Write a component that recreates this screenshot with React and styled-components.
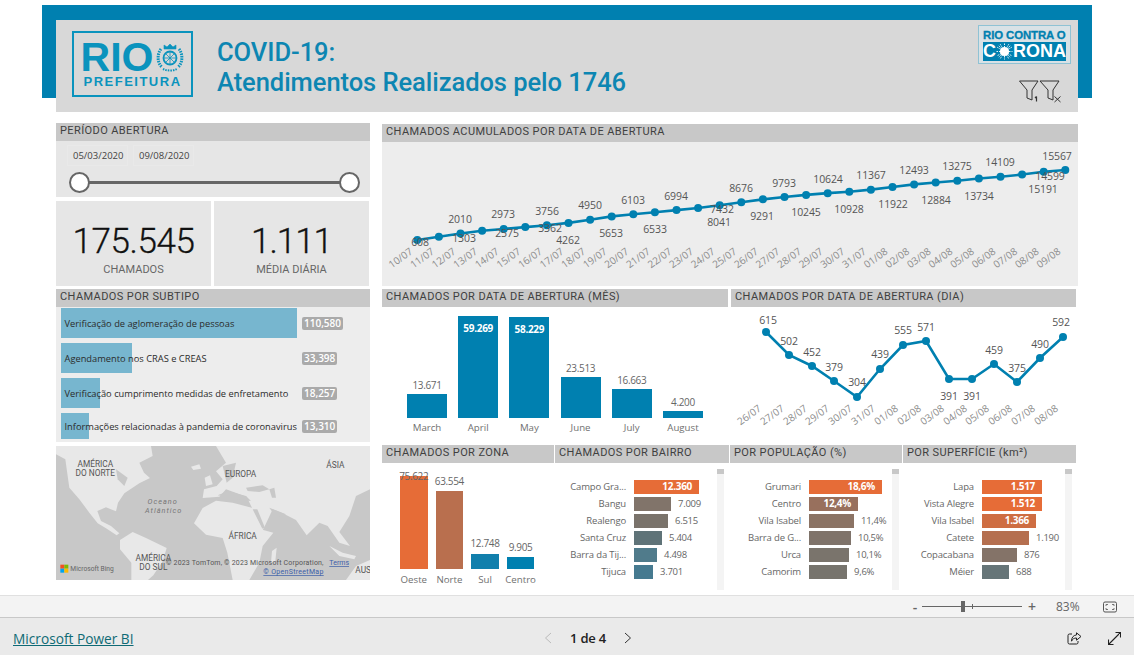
import React from "react"
import styled, { createGlobalStyle } from "styled-components"

const BLUE = "#0080b0"
const ORANGE = "#e66c37"

const GlobalStyle = createGlobalStyle`
html, body { margin: 0; padding: 0; background: #fff; overflow: hidden; }
* { box-sizing: border-box; }
`

const Page = styled.div`
height: 100vh;
display: flex;
flex-direction: column;
font-family: "Open Sans", sans-serif;
`
const Canvas = styled.div`
flex: 1;
padding-top: 5px;
`
const Banner = styled.div`
width: 1050px;
height: 93px;
margin-left: 42px;
padding: 15px 14px 0;
background: ${BLUE};
`
const Header = styled.header`
height: 92px;
background: #d8d8d8;
display: flex;
align-items: flex-start;
padding: 11px 7px 0 16px;
`
const LogoBox = styled.div`
width: 121px;
height: 66px;
border: 2px solid #0a93bd;
color: #0a93bd;
display: flex;
flex-direction: column;
align-items: center;
padding-top: 9px;
`
const LogoTop = styled.div`
display: flex;
align-items: center;
gap: 3px;
height: 30px;
`
const LogoRio = styled.span`
font-family: "Liberation Sans", sans-serif;
font-weight: 700;
font-size: 41px;
line-height: 30px;
`
const LogoPref = styled.span`
font-family: "Liberation Sans", sans-serif;
font-weight: 700;
font-size: 13px;
letter-spacing: 1.5px;
line-height: 14px;
margin-top: 3px;
`
const Title = styled.h1`
margin: 0 0 0 24px;
padding-top: 6px;
font-family: Roboto, sans-serif;
font-weight: 500;
font-size: 25.5px;
line-height: 30px;
letter-spacing: -0.05px;
color: #0d86b2;
`
const HeaderRight = styled.div`
margin-left: auto;
margin-top: -6px;
display: flex;
flex-direction: column;
align-items: flex-end;
`
const CoronaLogo = styled.div`
width: 93px;
height: 39px;
border: 1px solid #8fc2d4;
background: #d9e2e6;
padding: 4px 4px 0;
display: flex;
flex-direction: column;
font-family: "Liberation Sans", sans-serif;
font-weight: 700;
color: ${BLUE};
`
const CoronaTop = styled.div`
font-size: 11.4px;
line-height: 11px;
white-space: nowrap;
letter-spacing: -0.1px;
-webkit-text-stroke: 0.3px ${BLUE};
`
const CoronaBottom = styled.div`
background: ${BLUE};
color: #fff;
height: 19px;
margin-top: 1px;
font-size: 18px;
line-height: 19px;
display: flex;
align-items: center;
justify-content: center;
`
const FilterIcons = styled.svg`
display: block;
margin: 16px 8px 0 0;
`

const Dashboard = styled.div`
display: flex;
gap: 12px;
padding: 25px 0 0 56px;
`
const LeftCol = styled.div`
width: 314px;
display: flex;
flex-direction: column;
`
const RightCol = styled.div`
width: 696px;
padding-top: 1px;
display: flex;
flex-direction: column;
`
const Panel = styled.section`
width: ${p => p.$w ? p.$w + "px" : "auto"};
height: ${p => p.$h}px;
margin-top: ${p => p.$mt || 0}px;
background: ${p => p.$bg || "#fff"};
display: flex;
flex-direction: column;
`
const PanelTitle = styled.div`
height: 18px;
flex: none;
background: #c8c8c8;
color: #404040;
font-family: Roboto, sans-serif;
font-size: 11px;
line-height: 16px;
letter-spacing: 0.4px;
padding-left: 4px;
white-space: nowrap;
`
const Row = styled.div`
display: flex;
gap: ${p => p.$gap}px;
margin-top: ${p => p.$mt}px;
`

const DateRow = styled.div`
display: flex;
gap: 5px;
padding: 4px 0 0 11px;
`
const DateBox = styled.div`
width: 61px;
height: 21px;
border: 1px solid #e9e9e9;
font-size: 9.5px;
line-height: 19px;
color: #444;
padding-left: 5px;
overflow: hidden;
white-space: nowrap;
`
const SliderTrack = styled.div`
position: relative;
height: 3px;
margin: 15px 20px 0 24px;
background: #666;
`
const SliderThumb = styled.div`
position: absolute;
top: -9px;
${p => p.$right ? "right: -10px;" : "left: -11px;"}
width: 21px;
height: 21px;
border-radius: 50%;
background: #fff;
border: 2px solid #666;
`
const KpiCard = styled.div`
width: 155px;
height: 85px;
background: #e6e6e6;
text-align: center;
padding-top: 21px;
`
const KpiValue = styled.div`
font-family: Roboto, sans-serif;
font-weight: 300;
font-size: 35px;
line-height: 40px;
letter-spacing: ${p => p.$ls}px;
color: #111;
-webkit-text-stroke: 0.3px #111;
`
const KpiLabel = styled.div`
font-family: Roboto, sans-serif;
font-size: 11px;
line-height: 14px;
margin-top: 1px;
color: #666;
`

const SubtipoList = styled.div`
display: flex;
flex-direction: column;
gap: 5px;
padding: 1px 0 0 5px;
`
const SubtipoRow = styled.div`
position: relative;
height: ${p => p.$h}px;
display: flex;
align-items: center;
`
const SubtipoBar = styled.div`
height: 100%;
background: #77b6cf;
`
const SubtipoLabel = styled.span`
position: absolute;
left: 3.5px;
font-size: 9.3px;
color: #2b2b2b;
white-space: nowrap;
`
const SubtipoBadge = styled.span`
position: absolute;
left: 241px;
height: 13px;
padding: 0 2px;
border-radius: 2px;
background: #aaa;
color: #fff;
font-size: 10px;
font-weight: 600;
line-height: 13px;
`
const MapBox = styled.div`
height: 134px;
margin-top: 4px;
background: #c8c8c8;
`
const MapSvg = styled.svg`
display: block;
width: 100%;
height: 100%;
`
const MapText = styled.text`
font-family: Roboto, sans-serif;
font-size: ${p => p.$size || 25}px;
font-style: ${p => p.$italic ? "italic" : "normal"};
letter-spacing: ${p => p.$ls || 0}px;
fill: ${p => p.$fill || "#555"};
text-anchor: ${p => p.$anchor || "middle"};
text-decoration: ${p => p.$link ? "underline" : "none"};
`

const ChartSvg = styled.svg`
display: block;
`
const PointLabel = styled.text`
font-size: 10.5px;
letter-spacing: -0.1px;
fill: #555;
text-anchor: middle;
dominant-baseline: central;
`
const AxisLabel = styled.text`
font-size: 10px;
fill: #8a8a8a;
text-anchor: end;
`

const ColChart = styled.div`
height: ${p => p.$h}px;
display: flex;
align-items: flex-end;
gap: ${p => p.$gap}px;
padding-left: ${p => p.$pl}px;
`
const Col = styled.div`
position: relative;
width: ${p => p.$w}px;
display: flex;
flex-direction: column;
align-items: center;
`
const ColValue = styled.span`
font-size: 10px;
letter-spacing: -0.35px;
line-height: 14px;
color: #666;
white-space: nowrap;
margin-bottom: ${p => p.$mb}px;
position: relative;
z-index: 1;
`
const ColInside = styled.span`
position: absolute;
top: 5px;
left: 0;
right: 0;
text-align: center;
font-size: 10px;
letter-spacing: -0.3px;
font-weight: 700;
line-height: 14px;
color: #fff;
`
const ColBar = styled.div`
position: relative;
width: 100%;
height: ${p => p.$h}px;
background: ${p => p.$color};
`
const ColName = styled.span`
font-size: 9.7px;
line-height: 14px;
margin-top: ${p => p.$mt}px;
color: #707070;
white-space: nowrap;
`

const HBarBody = styled.div`
flex: 1;
display: flex;
`
const HBarList = styled.div`
width: 162px;
padding-top: 17px;
display: flex;
flex-direction: column;
gap: 3.4px;
`
const HBarRow = styled.div`
height: 13.6px;
display: flex;
align-items: center;
`
const HBarLabel = styled.span`
width: 71px;
text-align: right;
font-size: 9.5px;
letter-spacing: -0.15px;
color: #666;
white-space: nowrap;
margin-right: 8px;
flex: none;
`
const HBarFill = styled.div`
height: 100%;
width: ${p => p.$w}px;
background: ${p => p.$color};
color: #fff;
font-size: 10px;
letter-spacing: -0.3px;
font-weight: 700;
line-height: 13.6px;
text-align: right;
padding-right: 7px;
flex: none;
`
const HBarValue = styled.span`
font-size: 9.5px;
letter-spacing: -0.25px;
color: #666;
margin-left: 7px;
`
const Scrollbar = styled.div`
width: 7px;
margin-top: 6px;
background: #f4f4f4;
`
const ScrollThumb = styled.div`
height: 5px;
background: #c8c8c8;
`

const ZoomBar = styled.div`
height: 23px;
flex: none;
background: #f3f3f3;
border-top: 1px solid #e0e0e0;
border-bottom: 1px solid #c8c8c8;
display: flex;
align-items: center;
padding-left: 909px;
color: #666;
`
const ZoomSign = styled.span`
font-size: 14px;
font-weight: 600;
width: 12px;
line-height: 20px;
text-align: center;
`
const ZoomTrack = styled.div`
position: relative;
width: 100px;
height: 1px;
margin: 0 4px 0 1px;
background: #666;
`
const ZoomHandle = styled.div`
position: absolute;
left: 39px;
top: -5px;
width: 4px;
height: 11px;
background: #666;
`
const ZoomTick = styled.div`
position: absolute;
left: 50px;
top: -2px;
width: 1px;
height: 5px;
background: #666;
`
const ZoomPercent = styled.span`
font-size: 12px;
margin-left: 18px;
`
const FitIcon = styled.svg`
margin-left: 23px;
`
const NavBar = styled.div`
height: 37px;
flex: none;
background: #eaeaea;
display: grid;
grid-template-columns: 1fr auto 1fr;
align-items: center;
padding: 3px 13px 0 13px;
`
const BrandLink = styled.a`
font-size: 13.7px;
color: #0f6a75;
text-decoration: underline;
`
const Pager = styled.div`
display: flex;
align-items: center;
gap: 18px;
margin-left: 42px;
font-size: 13px;
letter-spacing: -0.2px;
font-weight: 600;
color: #222;
`
const NavIcons = styled.div`
display: flex;
justify-content: flex-end;
align-items: center;
gap: 26px;
`

// dados lidos do relatorio
const acumulado = [608, 1303, 2010, 2575, 2973, 3362, 3756, 4262, 4950, 5653, 6103, 6533, 6994, 7432, 8041, 8676, 9291, 9793, 10245, 10624, 10928, 11367, 11922, 12493, 12884, 13275, 13734, 14109, 14599, 15191, 15567]
const acumuladoDatas = [10, 11, 12, 13, 14, 15, 16, 17, 18, 19, 20, 21, 22, 23, 24, 25, 26, 27, 28, 29, 30, 31].map(d => d + "/07").concat(["01/08", "02/08", "03/08", "04/08", "05/08", "06/08", "07/08", "08/08", "09/08"])
const acumuladoLabels = [
  ["608", 420, 242], ["1303", 464, 238], ["2010", 460, 219], ["2575", 507, 233], ["2973", 503, 214], ["3362", 550, 228], ["3756", 547, 211],
  ["4262", 568, 240], ["4950", 590, 205], ["5653", 611, 233], ["6103", 633, 200], ["6533", 655, 229], ["6994", 676, 196], ["7432", 722, 209],
  ["8041", 719, 222], ["8676", 741, 188], ["9291", 762, 216], ["9793", 784, 183], ["10245", 806, 212], ["10624", 828, 179], ["10928", 849, 209],
  ["11367", 871, 175], ["11922", 893, 204], ["12493", 914, 170], ["12884", 936, 200], ["13275", 957, 166], ["13734", 979, 196], ["14109", 1000, 162],
  ["14599", 1050, 176], ["15191", 1043, 189], ["15567", 1057, 156],
]
const dia = [
  ["26/07", 766, 332, 615, 768, 320], ["27/07", 789, 355, 502, 789, 341], ["28/07", 812, 366, 452, 812, 352], ["29/07", 834, 381, 379, 834, 367],
  ["30/07", 857, 397, 304, 857, 382], ["31/07", 880, 369, 439, 880, 354], ["01/08", 903, 345, 555, 903, 330], ["02/08", 926, 341, 571, 926, 327],
  ["03/08", 949, 379, 391, 949, 396], ["04/08", 972, 379, 391, 972, 396], ["05/08", 994, 364, 459, 994, 350], ["06/08", 1017, 382, 375, 1017, 368],
  ["07/08", 1040, 358, 490, 1040, 344], ["08/08", 1063, 337, 592, 1061, 322],
]
const meses = [
  { name: "March", value: "13.671", h: 24 }, { name: "April", value: "59.269", h: 102, inside: true }, { name: "May", value: "58.229", h: 101, inside: true },
  { name: "June", value: "23.513", h: 41 }, { name: "July", value: "16.663", h: 29 }, { name: "August", value: "4.200", h: 7 },
]
const zonas = [
  { name: "Oeste", value: "75.622", h: 93, color: ORANGE, mb: -7 }, { name: "Norte", value: "63.554", h: 78, color: "#b96f4e", mb: 3 },
  { name: "Sul", value: "12.748", h: 15, color: "#117fac", mb: 4 }, { name: "Centro", value: "9.905", h: 12, color: BLUE, mb: 3 },
]
const subtipos = [
  { label: "Verificação de aglomeração de pessoas", w: 236, h: 30, value: "110,580" },
  { label: "Agendamento nos CRAS e CREAS", w: 71, h: 30, value: "33,398" },
  { label: "Verificação cumprimento medidas de enfretamento", w: 39, h: 30, value: "18,257" },
  { label: "Informações relacionadas à pandemia de coronavirus", w: 28, h: 26, value: "13,310" },
]
const bairros = [
  { label: "Campo Gra...", w: 65, color: ORANGE, value: "12.360", inside: true }, { label: "Bangu", w: 37, color: "#81746a", value: "7.009" },
  { label: "Realengo", w: 34, color: "#7a736b", value: "6.515" }, { label: "Santa Cruz", w: 28, color: "#5f7378", value: "5.404" },
  { label: "Barra da Tij...", w: 23, color: "#507b8b", value: "4.498" }, { label: "Tijuca", w: 19, color: "#467a90", value: "3.701" },
]
const populacao = [
  { label: "Grumari", w: 73, color: ORANGE, value: "18,6%", inside: true }, { label: "Centro", w: 49, color: "#98705d", value: "12,4%", inside: true },
  { label: "Vila Isabel", w: 45, color: "#8b7364", value: "11,4%" }, { label: "Barra de G...", w: 42, color: "#7f736a", value: "10,5%" },
  { label: "Urca", w: 40, color: "#7a746c", value: "10,1%" }, { label: "Camorim", w: 38, color: "#77746d", value: "9,6%" },
]
const superficie = [
  { label: "Lapa", w: 60, color: ORANGE, value: "1.517", inside: true }, { label: "Vista Alegre", w: 60, color: ORANGE, value: "1.512", inside: true },
  { label: "Vila Isabel", w: 54, color: "#ce6d42", value: "1.366", inside: true }, { label: "Catete", w: 47, color: "#b56f4f", value: "1.190" },
  { label: "Copacabana", w: 35, color: "#847368", value: "876" }, { label: "Méier", w: 27, color: "#667578", value: "688" },
]

const Crest = () => (
  <svg width="28" height="30" viewBox="0 0 28 30" fill="none" stroke="#0a93bd">
    <path d="M8 7 L8 3 L11 5 L14 2 L17 5 L20 3 L20 7 Z" fill="#0a93bd" strokeWidth="0.6" />
    <circle cx="14" cy="16" r="6.5" strokeWidth="1.8" />
    <path d="M14 9.5V22.5M7.5 16H20.5M9.5 11.5L18.5 20.5M18.5 11.5L9.5 20.5" strokeWidth="0.8" />
    <path d="M5 7C1 12 1 21 6 25M23 7C27 12 27 21 22 25" strokeWidth="3" strokeDasharray="1.5 1" />
    <path d="M7 27C11 29 17 29 21 27" strokeWidth="2" strokeDasharray="1.5 1" />
  </svg>
)

const Virus = () => (
  <svg width="17" height="17" viewBox="0 0 17 17" fill="#fff" stroke="#fff">
    <circle cx="8.5" cy="8.5" r="4.6" strokeWidth="0" />
    <path d="M8.5 0.5V16.5M0.5 8.5H16.5M2.8 2.8L14.2 14.2M14.2 2.8L2.8 14.2M4.2 1.2L12.8 15.8M12.8 1.2L4.2 15.8M1.2 4.2L15.8 12.8M15.8 4.2L1.2 12.8" strokeWidth="0.9" strokeDasharray="1.5 1" />
  </svg>
)

const Filters = () => (
  <FilterIcons width="44" height="24" viewBox="0 0 44 24" fill="none" stroke="#333" strokeWidth="1">
    <path d="M0.5 1H19L13 10V20L8 18V10Z" />
    <path d="M21 1H40L34 10V20L29 18V10Z" />
    <path d="M17.5 16.5V21.5M16 18L17.5 16.5" strokeWidth="1.2" />
    <path d="M35.5 16.5L41.5 22M41.5 16.5L35.5 22" />
  </FilterIcons>
)

const WorldMap = () => (
  <MapSvg viewBox="0 0 942 402" preserveAspectRatio="none">
    <g fill="#e8e8e8">
      <path d="M0 25L28 40L35 90L40 125L70 160L100 200L125 232L150 247L182 268L190 262L165 240L135 225L124 195L150 184L180 196L186 170L205 142L250 112L282 96L264 80L250 50L290 30L285 0H0Z" />
      <path d="M192 282L230 258L270 276L332 306L320 346L292 388L276 402H226L226 350L192 310Z" />
      <path d="M414 232L440 186L480 164L530 170L590 186L622 252L652 260L620 300L610 350L580 402H530L514 320L500 276L450 266Z" />
      <path d="M440 156L444 130L482 120L500 100L480 76L510 50L480 0H942V130L900 150L880 210L850 258L882 300L850 290L815 240L790 230L752 268L720 222L680 202L650 190L622 250L590 190L572 152L510 130L490 152Z" />
      <path d="M870 402L900 360L942 342V402Z" />
      <path d="M820 300L860 320L900 330L895 340L850 330Z" />
      <path d="M446 95L462 88L470 115L450 120Z" />
      <path d="M405 62L430 55L435 68L412 72Z" />
      <path d="M898 110L915 85L925 92L905 125Z" />
      <path d="M648 315L662 305L658 345L645 350Z" />
    </g>
    <g fill="#c8c8c8">
      <path d="M485 148L515 136L570 150L585 165L540 160L510 152Z" />
      <path d="M570 125L620 118L640 130L610 138L575 135Z" />
      <path d="M640 130L655 125L660 155L648 155Z" />
      <path d="M590 190L604 190L628 248L618 246Z" />
      <path d="M640 185L690 205L660 215Z" />
      <path d="M180 70L215 95L205 120L185 100Z" />
      <path d="M500 60L540 50L530 95L512 110Z" />
    </g>
    <MapText x="118" y="62">AMÉRICA</MapText>
    <MapText x="118" y="89">DO NORTE</MapText>
    <MapText x="554" y="92">EUROPA</MapText>
    <MapText x="838" y="67">ÁSIA</MapText>
    <MapText x="320" y="173" $italic $size={22} $ls={3} $fill="#777">Oceano</MapText>
    <MapText x="323" y="200" $italic $size={22} $ls={3} $fill="#777">Atlântico</MapText>
    <MapText x="560" y="280">ÁFRICA</MapText>
    <MapText x="292" y="345">AMÉRICA</MapText>
    <MapText x="292" y="372">DO SUL</MapText>
    <MapText x="898" y="380" $anchor="start">AUS</MapText>
    <rect x="13" y="356" width="12" height="12" fill="#f25022" />
    <rect x="25" y="356" width="12" height="12" fill="#7fba00" />
    <rect x="13" y="368" width="12" height="12" fill="#00a4ef" />
    <rect x="25" y="368" width="12" height="12" fill="#ffb900" />
    <MapText x="43" y="376" $anchor="start" $size={20} $fill="#666">Microsoft Bing</MapText>
    <MapText x="330" y="357" $anchor="start" $size={21} $ls={0.5} $fill="#555">© 2023 TomTom, © 2023 Microsoft Corporation,</MapText>
    <MapText x="820" y="357" $anchor="start" $size={21} $fill="#3b5ea8" $link>Terms</MapText>
    <MapText x="622" y="384" $anchor="start" $size={21} $ls={0.9} $fill="#3b5ea8" $link>© OpenStreetMap</MapText>
  </MapSvg>
)

const AccumulatedChart = () => {
  const pts = acumulado.map((v, i) => [417.3 - 382 + i * 21.6, 240 - 142 - (v - 608) * 0.00468])
  return (
    <ChartSvg width="696" height="144">
      <polyline points={pts.map(p => p.join(",")).join(" ")} fill="none" stroke={BLUE} strokeWidth="2.6" />
      {pts.map((p, i) => <circle key={i} cx={p[0]} cy={p[1]} r="4" fill={BLUE} />)}
      {acumuladoLabels.map(([t, x, y]) => <PointLabel key={t} x={x - 382} y={y - 142}>{t}</PointLabel>)}
      {pts.map((p, i) => (
        <AxisLabel key={i} x={p[0] - 4} y={111} transform={`rotate(-36 ${p[0] - 4} 111)`}>{acumuladoDatas[i]}</AxisLabel>
      ))}
    </ChartSvg>
  )
}

const DailyChart = () => (
  <ChartSvg width="345" height="133">
    <polyline points={dia.map(d => `${d[1] - 731},${d[2] - 307}`).join(" ")} fill="none" stroke={BLUE} strokeWidth="2.6" />
    {dia.map(d => <circle key={d[0]} cx={d[1] - 731} cy={d[2] - 307} r="4" fill={BLUE} />)}
    {dia.map(d => <PointLabel key={d[0]} x={d[4] - 731} y={d[5] - 307}>{d[3]}</PointLabel>)}
    {dia.map(d => (
      <AxisLabel key={d[0]} x={d[1] - 735} y={103} transform={`rotate(-36 ${d[1] - 735} 103)`}>{d[0]}</AxisLabel>
    ))}
  </ChartSvg>
)

const HBars = ({ title, rows, w }) => (
  <Panel $w={w} $h={145}>
    <PanelTitle>{title}</PanelTitle>
    <HBarBody>
      <HBarList>
        {rows.map(r => (
          <HBarRow key={r.label}>
            <HBarLabel>{r.label}</HBarLabel>
            <HBarFill $w={r.w} $color={r.color}>{r.inside ? r.value : null}</HBarFill>
            {r.inside ? null : <HBarValue>{r.value}</HBarValue>}
          </HBarRow>
        ))}
      </HBarList>
      <Scrollbar><ScrollThumb /></Scrollbar>
    </HBarBody>
  </Panel>
)

const App = () => (
  <Page>
    <GlobalStyle />
    <Canvas>
      <Banner>
        <Header>
          <LogoBox>
            <LogoTop><LogoRio>RIO</LogoRio><Crest /></LogoTop>
            <LogoPref>PREFEITURA</LogoPref>
          </LogoBox>
          <Title>COVID-19:<br />Atendimentos Realizados pelo 1746</Title>
          <HeaderRight>
            <CoronaLogo>
              <CoronaTop>RIO CONTRA O</CoronaTop>
              <CoronaBottom>C<Virus />RONA</CoronaBottom>
            </CoronaLogo>
            <Filters />
          </HeaderRight>
        </Header>
      </Banner>
      <Dashboard>
        <LeftCol>
          <Panel $h={74} $bg="#e6e6e6">
            <PanelTitle>PERÍODO ABERTURA</PanelTitle>
            <DateRow>
              <DateBox>05/03/2020</DateBox>
              <DateBox>09/08/2020</DateBox>
            </DateRow>
            <SliderTrack>
              <SliderThumb />
              <SliderThumb $right />
            </SliderTrack>
          </Panel>
          <Row $gap={3} $mt={4}>
            <KpiCard>
              <KpiValue $ls={-0.4}>175.545</KpiValue>
              <KpiLabel>CHAMADOS</KpiLabel>
            </KpiCard>
            <KpiCard>
              <KpiValue $ls={-1}>1.111</KpiValue>
              <KpiLabel>MÉDIA DIÁRIA</KpiLabel>
            </KpiCard>
          </Row>
          <Panel $h={153} $mt={3} $bg="#ededed">
            <PanelTitle>CHAMADOS POR SUBTIPO</PanelTitle>
            <SubtipoList>
              {subtipos.map(s => (
                <SubtipoRow key={s.value} $h={s.h}>
                  <SubtipoBar style={{ width: s.w }} />
                  <SubtipoLabel>{s.label}</SubtipoLabel>
                  <SubtipoBadge>{s.value}</SubtipoBadge>
                </SubtipoRow>
              ))}
            </SubtipoList>
          </Panel>
          <MapBox><WorldMap /></MapBox>
        </LeftCol>
        <RightCol>
          <Panel $h={162} $bg="#ededed">
            <PanelTitle>CHAMADOS ACUMULADOS POR DATA DE ABERTURA</PanelTitle>
            <AccumulatedChart />
          </Panel>
          <Row $gap={3} $mt={3}>
            <Panel $w={346} $h={151}>
              <PanelTitle>CHAMADOS POR DATA DE ABERTURA (MÊS)</PanelTitle>
              <ColChart $h={128} $gap={11.2} $pl={25}>
                {meses.map(m => (
                  <Col key={m.name} $w={40}>
                    {m.inside ? null : <ColValue $mb={2}>{m.value}</ColValue>}
                    <ColBar $h={m.h} $color={BLUE}>{m.inside ? <ColInside>{m.value}</ColInside> : null}</ColBar>
                    <ColName $mt={3}>{m.name}</ColName>
                  </Col>
                ))}
              </ColChart>
            </Panel>
            <Panel $w={345} $h={151}>
              <PanelTitle>CHAMADOS POR DATA DE ABERTURA (DIA)</PanelTitle>
              <DailyChart />
            </Panel>
          </Row>
          <Row $gap={1} $mt={5}>
            <Panel $w={172} $h={145}>
              <PanelTitle>CHAMADOS POR ZONA</PanelTitle>
              <ColChart $h={124} $gap={8} $pl={18}>
                {zonas.map(z => (
                  <Col key={z.name} $w={27.6}>
                    <ColValue $mb={z.mb}>{z.value}</ColValue>
                    <ColBar $h={z.h} $color={z.color} />
                    <ColName $mt={4}>{z.name}</ColName>
                  </Col>
                ))}
              </ColChart>
            </Panel>
            <HBars title="CHAMADOS POR BAIRRO" rows={bairros} w={174} />
            <HBars title="POR POPULAÇÃO (%)" rows={populacao} w={172} />
            <HBars title={<>POR SUPERFÍCIE (km²)</>} rows={superficie} w={173} />
          </Row>
        </RightCol>
      </Dashboard>
    </Canvas>
    <ZoomBar>
      <ZoomSign>-</ZoomSign>
      <ZoomTrack><ZoomHandle /><ZoomTick /></ZoomTrack>
      <ZoomSign>+</ZoomSign>
      <ZoomPercent>83%</ZoomPercent>
      <FitIcon width="14" height="12" viewBox="0 0 14 12" fill="none" stroke="#555">
        <rect x="0.5" y="1" width="13" height="10" rx="1.5" />
        <path d="M3 5V3.5H5M9 3.5H11V5M11 7V8.5H9M5 8.5H3V7" strokeWidth="0.8" />
      </FitIcon>
    </ZoomBar>
    <NavBar>
      <BrandLink>Microsoft Power BI</BrandLink>
      <Pager>
        <svg width="8" height="12" viewBox="0 0 8 12" fill="none" stroke="#bbb"><path d="M7 1L1.5 6L7 11" /></svg>
        <span>1 de 4</span>
        <svg width="8" height="12" viewBox="0 0 8 12" fill="none" stroke="#333"><path d="M1 1L6.5 6L1 11" /></svg>
      </Pager>
      <NavIcons>
        <svg width="15" height="13" viewBox="0 0 15 13" fill="none" stroke="#222">
          <path d="M5 2H2.5A1.5 1.5 0 0 0 1 3.5V10.5A1.5 1.5 0 0 0 2.5 12H9.5A1.5 1.5 0 0 0 11 10.5V9" />
          <path d="M9.5 0.8L14 4.5L9.5 8.2V6C7 6 5.5 7 4.5 9.2C4.5 5.8 6.2 3.2 9.5 2.9Z" />
        </svg>
        <svg width="13" height="13" viewBox="0 0 13 13" fill="none" stroke="#222" strokeWidth="1.1">
          <path d="M0.5 12.5L12.5 0.5M7.5 0.5H12.5V5.5M0.5 7.5V12.5H5.5" />
        </svg>
      </NavIcons>
    </NavBar>
  </Page>
)

export default App
